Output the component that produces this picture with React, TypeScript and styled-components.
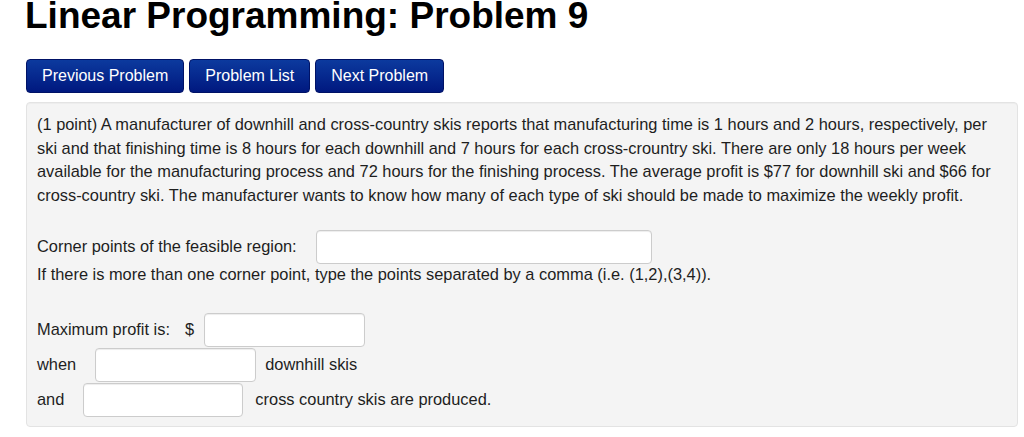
import React from "react";
import styled, { createGlobalStyle } from "styled-components";

const GlobalStyle = createGlobalStyle`
  html, body {
    margin: 0;
    padding: 0;
    background: #ffffff;
  }
  body {
    font-family: "Liberation Sans", Helvetica, Arial, sans-serif;
    color: #222222;
  }
`;

const Page = styled.div`
  width: 992px;
  margin-left: 26px;
`;

const Title = styled.h1`
  margin: 0 0 0 -1px;
  font-size: 37px;
  line-height: 32px;
  font-weight: 700;
  color: #000000;
  white-space: nowrap;
`;

const ButtonBar = styled.nav`
  display: flex;
  gap: 5px;
  margin-top: 27px;
`;

const NavButton = styled.button`
  height: 34px;
  padding: 0 15px;
  box-sizing: border-box;
  border: 1px solid #001266;
  border-radius: 4px;
  background: linear-gradient(to bottom, #0c3a9e 0%, #00187f 100%);
  color: #ffffff;
  font-family: "Liberation Sans", Helvetica, Arial, sans-serif;
  font-size: 16px;
  line-height: 32px;
  white-space: nowrap;
  cursor: pointer;
`;

const Well = styled.section`
  margin-top: 9px;
  box-sizing: border-box;
  padding: 10px 10px 9px 10px;
  background: #f4f4f4;
  border: 1px solid #e3e3e3;
  border-radius: 4px;
  box-shadow: inset 0 1px 1px rgba(0, 0, 0, 0.03);
  font-size: 16.4px;
  line-height: 23.5px;
  color: #1e1e1e;
`;

const Statement = styled.p`
  margin: 0;
`;

const FieldRow = styled.div<{ $height?: number; $top?: number }>`
  display: flex;
  align-items: center;
  height: ${(p) => p.$height ?? 34}px;
  margin-top: ${(p) => p.$top ?? 0}px;
  white-space: nowrap;
`;

const Label = styled.span<{ $gap?: number }>`
  margin-right: ${(p) => p.$gap ?? 19}px;
`;

const Trailing = styled.span<{ $gap?: number }>`
  margin-left: ${(p) => p.$gap ?? 10}px;
`;

const AnswerInput = styled.input<{ $width: number }>`
  width: ${(p) => p.$width}px;
  height: 34px;
  box-sizing: border-box;
  padding: 4px 6px;
  background: #ffffff;
  border: 1px solid #cccccc;
  border-radius: 4px;
  box-shadow: inset 0 1px 1px rgba(0, 0, 0, 0.075);
  font-family: "Liberation Sans", Helvetica, Arial, sans-serif;
  font-size: 16px;
  color: #222222;
  outline: none;
`;

const Hint = styled.div`
  line-height: 20px;
  white-space: nowrap;
`;

const AnswerBlock = styled.div`
  margin-top: 28px;
`;

export default function App() {
  return (
    <>
      <GlobalStyle />
      <Page>
        <Title>Linear Programming: Problem 9</Title>
        <ButtonBar>
          <NavButton type="button">Previous Problem</NavButton>
          <NavButton type="button">Problem List</NavButton>
          <NavButton type="button">Next Problem</NavButton>
        </ButtonBar>
        <Well>
          <Statement>
            (1 point) A manufacturer of downhill and cross-country skis reports that
            manufacturing time is 1 hours and 2 hours, respectively, per ski and that
            finishing time is 8 hours for each downhill and 7 hours for each
            cross-crountry ski. There are only 18 hours per week available for the
            manufacturing process and 72 hours for the finishing process. The average
            profit is $77 for downhill ski and $66 for cross-country ski. The
            manufacturer wants to know how many of each type of ski should be made to
            maximize the weekly profit.
          </Statement>
          <FieldRow $top={23}>
            <Label>Corner points of the feasible region:</Label>
            <AnswerInput $width={336} aria-label="Corner points" />
          </FieldRow>
          <Hint>
            If there is more than one corner point, type the points separated by a
            comma (i.e. (1,2),(3,4)).
          </Hint>
          <AnswerBlock>
            <FieldRow $height={35}>
              <Label $gap={15}>Maximum profit is:</Label>
              <Label $gap={10}>$</Label>
              <AnswerInput $width={161} aria-label="Maximum profit" />
            </FieldRow>
            <FieldRow $height={35}>
              <Label>when</Label>
              <AnswerInput $width={161} aria-label="Downhill skis" />
              <Trailing $gap={9}>downhill skis</Trailing>
            </FieldRow>
            <FieldRow $height={35}>
              <Label>and</Label>
              <AnswerInput $width={160} aria-label="Cross country skis" />
              <Trailing $gap={12}>cross country skis are produced.</Trailing>
            </FieldRow>
          </AnswerBlock>
        </Well>
      </Page>
    </>
  );
}
